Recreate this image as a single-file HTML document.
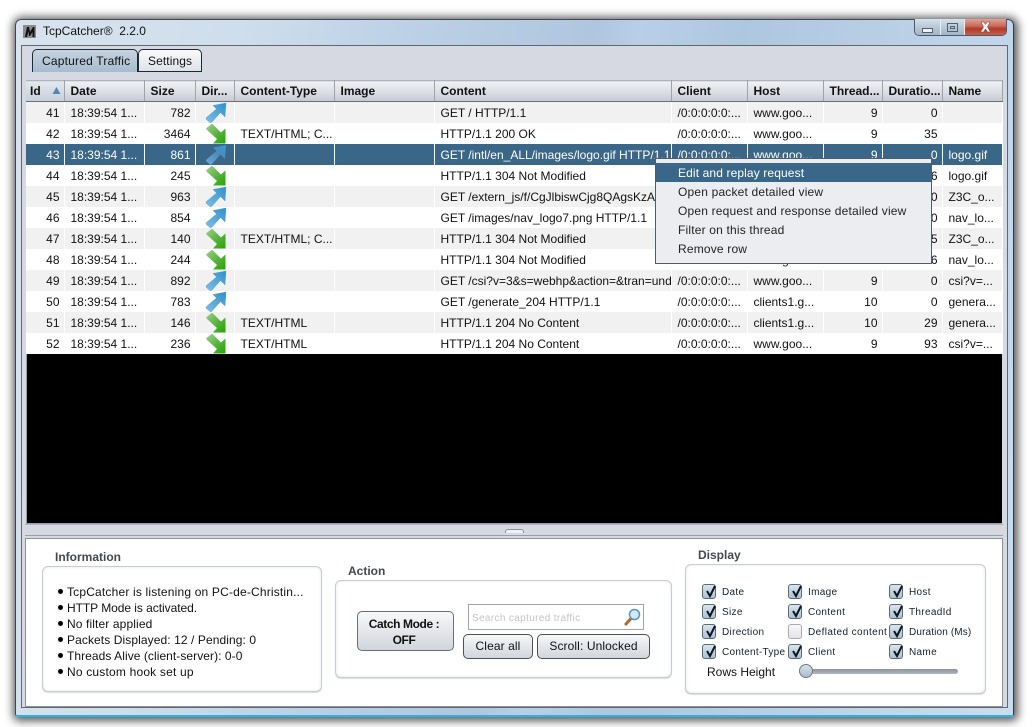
<!DOCTYPE html>
<html><head><meta charset="utf-8"><style>
html,body{margin:0;padding:0;background:#fff}
body{width:1035px;height:727px;overflow:hidden;position:relative;font-family:"Liberation Sans",sans-serif;font-size:12px;color:#111}
div,span,svg{position:absolute;box-sizing:border-box}
.t{white-space:nowrap}
#win{left:15px;top:19px;width:999px;height:698px;border-radius:6px 6px 3px 3px;background:linear-gradient(100deg,#d8e3ee 0,#cfdeec 20%,#bcd1e7 35%,#afc6de 52%,#b9cfe7 56%,#adc7df 65%,#bfd3e9 85%,#cbdcee 100%);box-shadow:1px 1px 9px 3px rgba(0,0,0,.65);border:1px solid #3c4a58;border-bottom:2px solid #27b4e0;border-right:1px solid #2a3c4c}
#panel{left:21px;top:45px;width:987px;height:663px;background:#d6d9e1;border:1px solid #5f6870}
#tab1{left:32px;top:49px;width:106px;height:23px;background:linear-gradient(#c6d3df,#a7bccf);border:1px solid #1c2a35;border-bottom:none;border-radius:5px 5px 0 0;padding:4px 0 0 9px;letter-spacing:.2px}
#tab2{left:138px;top:49px;width:64px;height:23px;background:linear-gradient(#fafafb,#dfe2e8);border:1px solid #1c2a35;border-radius:5px 5px 0 0;padding:4px 0 0 9px;letter-spacing:.1px}
#tbl{left:26px;top:80px;width:976px;height:444px;background:#000;border:1px solid #9a9ea6;border-right:0}
table{position:absolute;left:26px;top:80px;border-collapse:collapse;table-layout:fixed;width:976px;font-size:12px}
th{height:21px;box-sizing:border-box;padding:0 0 0 6px;text-align:left;font-weight:bold;font-size:12px;background:linear-gradient(#f1f2f5,#d8dbe2 60%,#c6c9d1);border-right:1px solid #9ea2aa;border-bottom:1px solid #6a7078;border-top:1px solid #b0b3ba;overflow:hidden;white-space:nowrap}
td{height:21px;padding:2px 4px 0 6px;border-right:1px solid #fff;overflow:hidden;white-space:nowrap;background:#fff;box-sizing:border-box}
tr.a td{background:#f1f1f2}
tr.s td{background:#3a6688;color:#fff}
td.r{text-align:right}
td.n{padding:0}
#split{left:505px;top:529px;width:19px;height:4px;border:1px solid #8e939a;border-bottom:0;border-radius:3px 3px 0 0;background:#eef0f3}
#low{left:25px;top:538px;width:978px;height:169px;background:#fff;border:1px solid #8e9298}
.box{background:#fff;border:1px solid #c9ccd0;border-radius:6px;box-shadow:inset 0 0 3px #e4e6e8,0 1px 1px #ddd}
.h{font-weight:bold;color:#44494f;font-size:12px;white-space:nowrap}
.btn{background:linear-gradient(#f7f8f9,#d2d5dc);border:1px solid #4c5058;border-radius:5px;text-align:center;white-space:nowrap}
.cb{width:14px;height:15px;border:1px solid #5b6a78;border-radius:3px;background:linear-gradient(#dbe4ec,#adc0d2)}
.cb svg{left:1px;top:-1px}
.cb.o{background:linear-gradient(#f8f8f9,#e3e4e8);border-color:#a8abb0}
.l{font-size:10px;letter-spacing:.32px;white-space:nowrap;color:#15202c}
.b{width:5px;height:5px;border-radius:50%;background:#000;left:58px}
.i{left:67px;white-space:nowrap}
.m{left:678px;white-space:nowrap;color:#222;letter-spacing:.18px}
</style></head><body>
<svg width="0" height="0" style="left:0;top:0"><defs>
<linearGradient id="gu" x1="0" y1="1" x2="1" y2="0"><stop offset="0" stop-color="#7fbde6"/><stop offset=".6" stop-color="#4fa4d6"/><stop offset="1" stop-color="#2f8ec8"/></linearGradient>
<linearGradient id="gs" x1="0" y1="1" x2="1" y2="0"><stop offset="0" stop-color="#6aaad4"/><stop offset=".6" stop-color="#4a8cba"/><stop offset="1" stop-color="#3a9ad6"/></linearGradient>
<linearGradient id="gd" x1="0" y1="0" x2="1" y2="1"><stop offset="0" stop-color="#9dcf8c"/><stop offset=".55" stop-color="#55b23c"/><stop offset="1" stop-color="#27a400"/></linearGradient>
<symbol id="up" viewBox="0 0 22 22"><path d="M21 1L8 3.500L11.500 7L1.500 15.500Q0.500 16.500 1.500 17.500L5 20.500Q6 21 7 20L15.500 10.500L20 15Z" fill="url(#gu)" stroke="#5b9fcb" stroke-width=".5"/></symbol>
<symbol id="ups" viewBox="0 0 22 22"><path d="M21 1L8 3.500L11.500 7L1.500 15.500Q0.500 16.500 1.500 17.500L5 20.500Q6 21 7 20L15.500 10.500L20 15Z" fill="url(#gs)"/></symbol>
<symbol id="dn" viewBox="0 0 22 22"><path d="M1.500 5L6 1.500Q7 0.500 8 1.500L16 9.500L20.500 5.500V20.500H8L12 16L1.500 6.500Q1 6 1.500 5Z" fill="url(#gd)"/></symbol>
</defs></svg>

<div id="win"></div>
<div class="t" style="left:23px;top:25px;width:13px;height:13px;background:#8a8a8a"></div>
<svg style="left:23px;top:25px" width="13" height="13"><path d="M2 12L4 2H6L7 7L10 2H11.500V12H9.500V7L7 11H6L5.500 6L4 12Z" fill="#111"/></svg>
<div class="t" style="left:43px;top:24px;font-size:12px">TcpCatcher®&nbsp; 2.2.0</div>

<div style="left:914px;top:19px;width:93px;height:17px;border:1px solid #4b5a6a;border-top:0;border-radius:0 0 5px 5px;overflow:hidden;background:#e8eef4">
  <div style="left:0;top:0;width:25px;height:16px;background:linear-gradient(#d6e0ea,#b9c8d7 50%,#a4b4c4)"></div>
  <div style="left:7px;top:9px;width:11px;height:5px;border:1px solid #56606c;background:#eef1f4"></div>
  <div style="left:26px;top:0;width:23px;height:16px;background:linear-gradient(#d6e0ea,#b9c8d7 50%,#a4b4c4)"></div>
  <div style="left:32px;top:4px;width:11px;height:9px;border:1px solid #56606c"></div><div style="left:35px;top:7px;width:5px;height:3px;border:1px solid #56606c"></div>
  <div style="left:50px;top:0;width:42px;height:16px;background:linear-gradient(#e2a196,#c9685a 45%,#b23a28 60%,#c4604e)"></div>
  <svg style="left:64px;top:2px" width="13" height="12" viewBox="0 0 13 12"><path d="M2 1H5L6.500 3.500L8 1H11L8.500 6L11.500 11H8.500L6.500 8L4.500 11H1.500L4.500 6Z" fill="#f6f2f0" stroke="#7a3a30" stroke-width=".5"/></svg>
</div>

<div id="panel"></div>
<div id="tab1" class="t">Captured Traffic</div>
<div id="tab2" class="t">Settings</div>

<div id="tbl"></div>
<table><colgroup><col style="width:38px"><col style="width:80px"><col style="width:51px"><col style="width:39px"><col style="width:100px"><col style="width:100px"><col style="width:237px"><col style="width:76px"><col style="width:76px"><col style="width:59px"><col style="width:60px"><col style="width:60px"></colgroup>
<tr><th style="background:linear-gradient(#e3e8ee,#c5d0db);padding-left:4px">Id</th><th>Date</th><th>Size</th><th>Dir...</th><th>Content-Type</th><th>Image</th><th>Content</th><th>Client</th><th>Host</th><th>Thread...</th><th>Duratio...</th><th>Name</th></tr>
<tr class="a"><td class="r">41</td><td>18:39:54 1...</td><td class="r">782</td><td class="n"></td><td></td><td></td><td>GET / HTTP/1.1</td><td>/0:0:0:0:0:...</td><td>www.goo...</td><td class="r">9</td><td class="r">0</td><td></td></tr>
<tr><td class="r">42</td><td>18:39:54 1...</td><td class="r">3464</td><td class="n"></td><td>TEXT/HTML; C...</td><td></td><td>HTTP/1.1 200 OK</td><td>/0:0:0:0:0:...</td><td>www.goo...</td><td class="r">9</td><td class="r">35</td><td></td></tr>
<tr class="s"><td class="r">43</td><td>18:39:54 1...</td><td class="r">861</td><td class="n"></td><td></td><td></td><td>GET /intl/en_ALL/images/logo.gif HTTP/1.1</td><td>/0:0:0:0:0:...</td><td>www.goo...</td><td class="r">9</td><td class="r">0</td><td>logo.gif</td></tr>
<tr><td class="r">44</td><td>18:39:54 1...</td><td class="r">245</td><td class="n"></td><td></td><td></td><td>HTTP/1.1 304 Not Modified</td><td>/0:0:0:0:0:...</td><td>www.goo...</td><td class="r">9</td><td class="r">6</td><td>logo.gif</td></tr>
<tr class="a"><td class="r">45</td><td>18:39:54 1...</td><td class="r">963</td><td class="n"></td><td></td><td></td><td>GET /extern_js/f/CgJlbiswCjg8QAgsKzAKMAo4</td><td>/0:0:0:0:0:...</td><td>www.goo...</td><td class="r">9</td><td class="r">0</td><td>Z3C_o...</td></tr>
<tr><td class="r">46</td><td>18:39:54 1...</td><td class="r">854</td><td class="n"></td><td></td><td></td><td>GET /images/nav_logo7.png HTTP/1.1</td><td>/0:0:0:0:0:...</td><td>www.goo...</td><td class="r">9</td><td class="r">0</td><td>nav_lo...</td></tr>
<tr class="a"><td class="r">47</td><td>18:39:54 1...</td><td class="r">140</td><td class="n"></td><td>TEXT/HTML; C...</td><td></td><td>HTTP/1.1 304 Not Modified</td><td>/0:0:0:0:0:...</td><td>www.goo...</td><td class="r">9</td><td class="r">5</td><td>Z3C_o...</td></tr>
<tr><td class="r">48</td><td>18:39:54 1...</td><td class="r">244</td><td class="n"></td><td></td><td></td><td>HTTP/1.1 304 Not Modified</td><td>/0:0:0:0:0:...</td><td>www.goo...</td><td class="r">9</td><td class="r">6</td><td>nav_lo...</td></tr>
<tr class="a"><td class="r">49</td><td>18:39:54 1...</td><td class="r">892</td><td class="n"></td><td></td><td></td><td>GET /csi?v=3&amp;s=webhp&amp;action=&amp;tran=undefined</td><td>/0:0:0:0:0:...</td><td>www.goo...</td><td class="r">9</td><td class="r">0</td><td>csi?v=...</td></tr>
<tr><td class="r">50</td><td>18:39:54 1...</td><td class="r">783</td><td class="n"></td><td></td><td></td><td>GET /generate_204 HTTP/1.1</td><td>/0:0:0:0:0:...</td><td>clients1.g...</td><td class="r">10</td><td class="r">0</td><td>genera...</td></tr>
<tr class="a"><td class="r">51</td><td>18:39:54 1...</td><td class="r">146</td><td class="n"></td><td>TEXT/HTML</td><td></td><td>HTTP/1.1 204 No Content</td><td>/0:0:0:0:0:...</td><td>clients1.g...</td><td class="r">10</td><td class="r">29</td><td>genera...</td></tr>
<tr><td class="r">52</td><td>18:39:54 1...</td><td class="r">236</td><td class="n"></td><td>TEXT/HTML</td><td></td><td>HTTP/1.1 204 No Content</td><td>/0:0:0:0:0:...</td><td>www.goo...</td><td class="r">9</td><td class="r">93</td><td>csi?v=...</td></tr>
</table>
<svg style="left:52px;top:86px" width="9" height="9"><path d="M4.500 1L8.500 8H.5Z" fill="#5a86ae"/></svg>
<svg style="left:205px;top:102px" width="22" height="22"><use href="#up"/></svg>
<svg style="left:205px;top:123px" width="22" height="22"><use href="#dn"/></svg>
<svg style="left:205px;top:144px" width="22" height="22"><use href="#ups"/></svg>
<svg style="left:205px;top:165px" width="22" height="22"><use href="#dn"/></svg>
<svg style="left:205px;top:186px" width="22" height="22"><use href="#up"/></svg>
<svg style="left:205px;top:207px" width="22" height="22"><use href="#up"/></svg>
<svg style="left:205px;top:228px" width="22" height="22"><use href="#dn"/></svg>
<svg style="left:205px;top:249px" width="22" height="22"><use href="#dn"/></svg>
<svg style="left:205px;top:270px" width="22" height="22"><use href="#up"/></svg>
<svg style="left:205px;top:291px" width="22" height="22"><use href="#up"/></svg>
<svg style="left:205px;top:312px" width="22" height="22"><use href="#dn"/></svg>
<svg style="left:205px;top:333px" width="22" height="22"><use href="#dn"/></svg>

<div style="left:655px;top:158px;width:277px;height:106px;background:#ecedf1;border:1px solid #555b62"></div>
<div style="left:656px;top:163px;width:275px;height:19px;background:#3a6688"></div>
<div class="m" style="top:166px;color:#fff;letter-spacing:.12px">Edit and replay request</div>
<div class="m" style="top:185px">Open packet detailed view</div>
<div class="m" style="top:204px">Open request and response detailed view</div>
<div class="m" style="top:223px">Filter on this thread</div>
<div class="m" style="top:242px">Remove row</div>

<div id="split"></div>
<div style="left:25px;top:524px;width:978px;height:1px;background:#b0b3b9"></div>
<div style="left:25px;top:535px;width:978px;height:1px;background:#9a9da3"></div>
<div id="low"></div>

<div class="h" style="left:55px;top:550px">Information</div>
<div class="box" style="left:42px;top:566px;width:280px;height:126px"></div>
<div class="b" style="top:589px"></div><div class="i" style="top:585px;letter-spacing:.18px">TcpCatcher is listening on PC-de-Christin...</div>
<div class="b" style="top:605px"></div><div class="i" style="top:601px;letter-spacing:-.05px">HTTP Mode is activated.</div>
<div class="b" style="top:621px"></div><div class="i" style="top:617px;letter-spacing:.12px">No filter applied</div>
<div class="b" style="top:637px"></div><div class="i" style="top:633px;letter-spacing:.09px">Packets Displayed: 12 / Pending: 0</div>
<div class="b" style="top:653px"></div><div class="i" style="top:649px;letter-spacing:.06px">Threads Alive (client-server): 0-0</div>
<div class="b" style="top:669px"></div><div class="i" style="top:665px;letter-spacing:.19px">No custom hook set up</div>

<div class="h" style="left:348px;top:564px">Action</div>
<div class="box" style="left:335px;top:580px;width:337px;height:98px"></div>
<div class="btn" style="left:357px;top:611px;width:97px;height:40px;font-weight:bold;line-height:16px;padding-top:4px;border-color:#6a6e76;letter-spacing:-.4px;padding-right:3px">Catch Mode :<br>OFF</div>
<div style="left:468px;top:604px;width:176px;height:26px;border:1px solid #a0a4aa;background:#fff"></div>
<div class="t" style="left:472px;top:612px;font-size:10px;letter-spacing:.35px;color:#c2c4c8;margin-top:1px">Search captured traffic</div>
<svg style="left:624px;top:608px" width="18" height="18" viewBox="0 0 18 18"><path d="M7 10.500L2 16" stroke="#b06a28" stroke-width="3" stroke-linecap="round"/><circle cx="10.500" cy="6.500" r="5" fill="#d4e8f6" stroke="#5a94c4" stroke-width="1.500"/></svg>
<div class="btn" style="left:463px;top:634px;width:70px;height:25px;line-height:23px;letter-spacing:.1px">Clear all</div>
<div class="btn" style="left:537px;top:634px;width:113px;height:25px;line-height:23px;letter-spacing:.1px">Scroll: Unlocked</div>

<div class="h" style="left:698px;top:548px">Display</div>
<div class="box" style="left:685px;top:564px;width:301px;height:130px"></div>

<div class="cb" style="left:702px;top:584px"><svg width="14" height="15"><path d="M3 7L6 12L11 2" fill="none" stroke="#0c1622" stroke-width="2"/></svg></div><div class="l" style="left:722px;top:587px">Date</div>
<div class="cb" style="left:702px;top:604px"><svg width="14" height="15"><path d="M3 7L6 12L11 2" fill="none" stroke="#0c1622" stroke-width="2"/></svg></div><div class="l" style="left:722px;top:607px">Size</div>
<div class="cb" style="left:702px;top:624px"><svg width="14" height="15"><path d="M3 7L6 12L11 2" fill="none" stroke="#0c1622" stroke-width="2"/></svg></div><div class="l" style="left:722px;top:627px">Direction</div>
<div class="cb" style="left:702px;top:644px"><svg width="14" height="15"><path d="M3 7L6 12L11 2" fill="none" stroke="#0c1622" stroke-width="2"/></svg></div><div class="l" style="left:722px;top:647px;letter-spacing:.27px">Content-Type</div>

<div class="cb" style="left:788px;top:584px"><svg width="14" height="15"><path d="M3 7L6 12L11 2" fill="none" stroke="#0c1622" stroke-width="2"/></svg></div><div class="l" style="left:808px;top:587px">Image</div>
<div class="cb" style="left:788px;top:604px"><svg width="14" height="15"><path d="M3 7L6 12L11 2" fill="none" stroke="#0c1622" stroke-width="2"/></svg></div><div class="l" style="left:808px;top:607px">Content</div>
<div class="cb o" style="left:788px;top:624px"></div><div class="l" style="left:808px;top:627px;letter-spacing:.4px">Deflated content</div>
<div class="cb" style="left:788px;top:644px"><svg width="14" height="15"><path d="M3 7L6 12L11 2" fill="none" stroke="#0c1622" stroke-width="2"/></svg></div><div class="l" style="left:808px;top:647px">Client</div>

<div class="cb" style="left:889px;top:584px"><svg width="14" height="15"><path d="M3 7L6 12L11 2" fill="none" stroke="#0c1622" stroke-width="2"/></svg></div><div class="l" style="left:909px;top:587px">Host</div>
<div class="cb" style="left:889px;top:604px"><svg width="14" height="15"><path d="M3 7L6 12L11 2" fill="none" stroke="#0c1622" stroke-width="2"/></svg></div><div class="l" style="left:909px;top:607px">ThreadId</div>
<div class="cb" style="left:889px;top:624px"><svg width="14" height="15"><path d="M3 7L6 12L11 2" fill="none" stroke="#0c1622" stroke-width="2"/></svg></div><div class="l" style="left:909px;top:627px;letter-spacing:.14px">Duration (Ms)</div>
<div class="cb" style="left:889px;top:644px"><svg width="14" height="15"><path d="M3 7L6 12L11 2" fill="none" stroke="#0c1622" stroke-width="2"/></svg></div><div class="l" style="left:909px;top:647px">Name</div>

<div class="t" style="left:707px;top:665px">Rows Height</div>
<div style="left:799px;top:669px;width:159px;height:5px;border-radius:3px;background:linear-gradient(#8c929c,#b4b8c0)"></div>
<div style="left:799px;top:664px;width:14px;height:14px;border-radius:50%;border:1px solid #6f7a86;background:linear-gradient(#d8e2ea,#a9bccd)"></div>
</body></html>
